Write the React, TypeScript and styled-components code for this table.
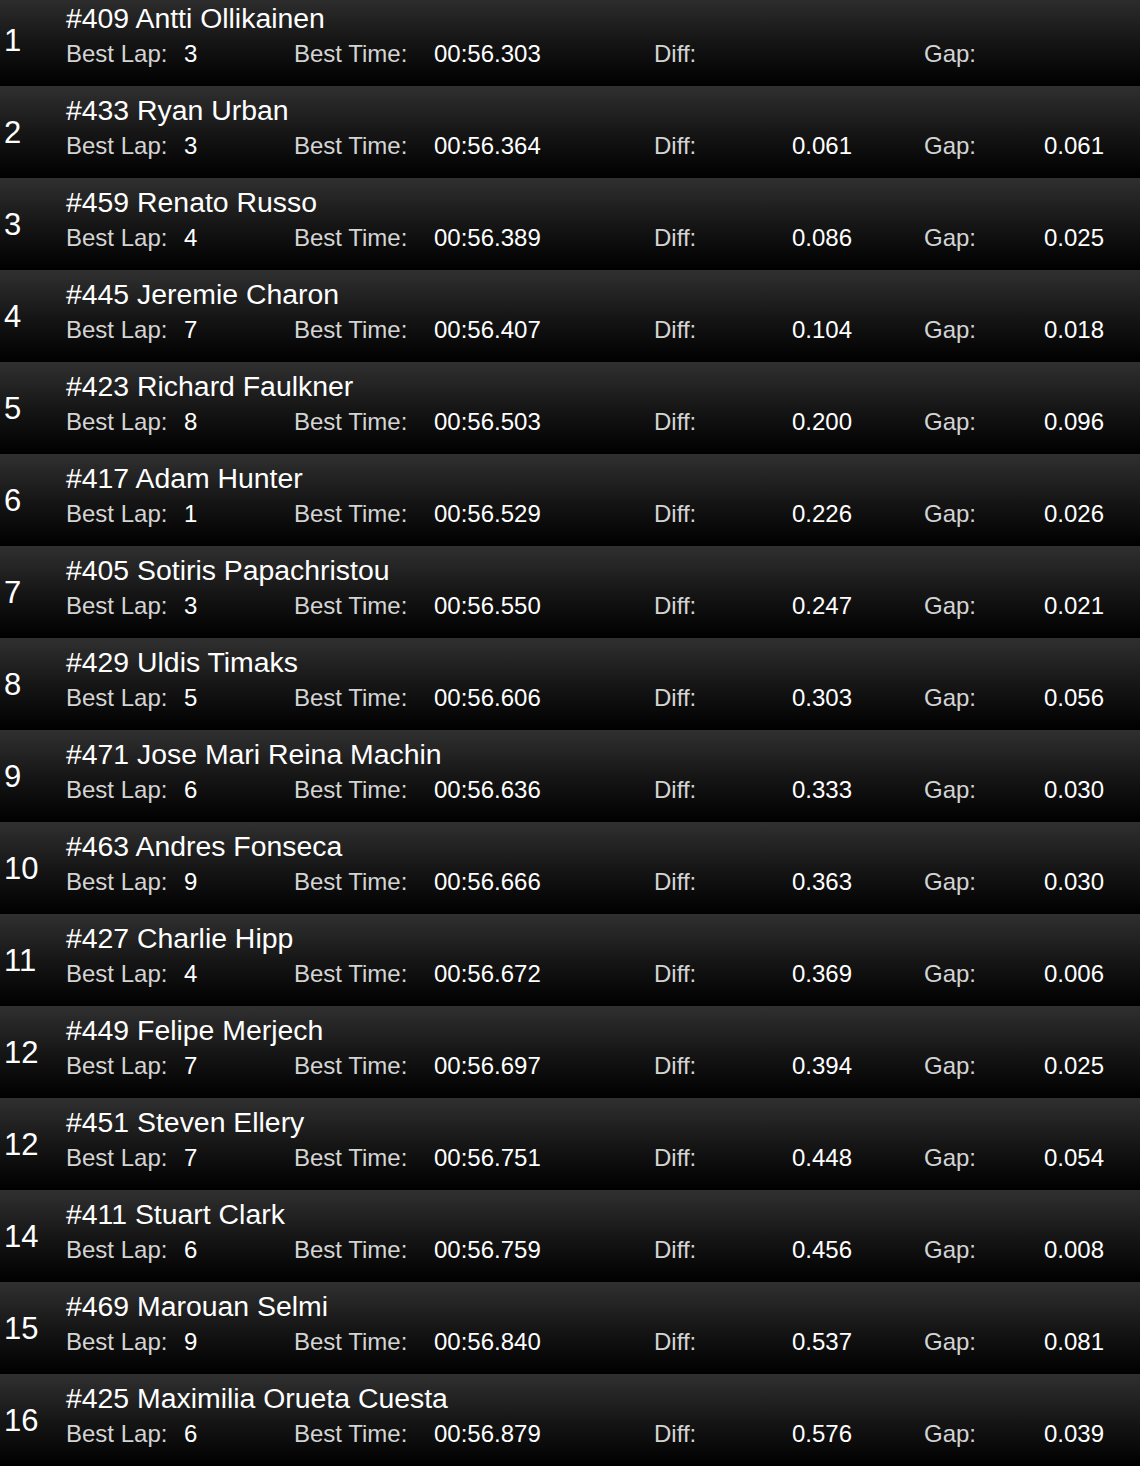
import React from "react";
import styled, { createGlobalStyle } from "styled-components";

const GlobalStyle = createGlobalStyle`
  html, body {
    margin: 0;
    padding: 0;
    background: #000;
  }
  body {
    font-family: "Liberation Sans", Arial, Helvetica, sans-serif;
    overflow: hidden;
  }
`;

type Result = {
  pos: string;
  name: string;
  lap: number;
  time: string;
  diff?: string;
  gap?: string;
};

const results: Result[] = [
  { pos: "1", name: "#409 Antti Ollikainen", lap: 3, time: "00:56.303" },
  { pos: "2", name: "#433 Ryan Urban", lap: 3, time: "00:56.364", diff: "0.061", gap: "0.061" },
  { pos: "3", name: "#459 Renato Russo", lap: 4, time: "00:56.389", diff: "0.086", gap: "0.025" },
  { pos: "4", name: "#445 Jeremie Charon", lap: 7, time: "00:56.407", diff: "0.104", gap: "0.018" },
  { pos: "5", name: "#423 Richard Faulkner", lap: 8, time: "00:56.503", diff: "0.200", gap: "0.096" },
  { pos: "6", name: "#417 Adam Hunter", lap: 1, time: "00:56.529", diff: "0.226", gap: "0.026" },
  { pos: "7", name: "#405 Sotiris Papachristou", lap: 3, time: "00:56.550", diff: "0.247", gap: "0.021" },
  { pos: "8", name: "#429 Uldis Timaks", lap: 5, time: "00:56.606", diff: "0.303", gap: "0.056" },
  { pos: "9", name: "#471 Jose Mari Reina Machin", lap: 6, time: "00:56.636", diff: "0.333", gap: "0.030" },
  { pos: "10", name: "#463 Andres Fonseca", lap: 9, time: "00:56.666", diff: "0.363", gap: "0.030" },
  { pos: "11", name: "#427 Charlie Hipp", lap: 4, time: "00:56.672", diff: "0.369", gap: "0.006" },
  { pos: "12", name: "#449 Felipe Merjech", lap: 7, time: "00:56.697", diff: "0.394", gap: "0.025" },
  { pos: "12", name: "#451 Steven Ellery", lap: 7, time: "00:56.751", diff: "0.448", gap: "0.054" },
  { pos: "14", name: "#411 Stuart Clark", lap: 6, time: "00:56.759", diff: "0.456", gap: "0.008" },
  { pos: "15", name: "#469 Marouan Selmi", lap: 9, time: "00:56.840", diff: "0.537", gap: "0.081" },
  { pos: "16", name: "#425 Maximilia Orueta Cuesta", lap: 6, time: "00:56.879", diff: "0.576", gap: "0.039" },
];

const Board = styled.div`
  margin-top: -6px;
  width: 1140px;
`;

const Row = styled.div`
  display: grid;
  grid-template-columns: 66px 1fr;
  height: 92px;
  background: linear-gradient(to bottom, #303030 0%, #161616 50%, #000 100%);
`;

const Position = styled.div`
  align-self: center;
  padding-left: 4px;
  font-size: 31px;
  line-height: 31px;
  color: #fff;
`;

const Details = styled.div`
  padding-top: 9px;
`;

const Name = styled.div`
  font-size: 28.4px;
  line-height: 30px;
  color: #fff;
  margin-bottom: 7px;
  white-space: nowrap;
`;

const Stats = styled.div`
  display: grid;
  grid-template-columns: 118px 110px 140px 220px 138px 132px 120px auto;
  font-size: 24px;
  line-height: 28px;
  white-space: nowrap;
`;

const Label = styled.span`
  color: #d4d4d4;
`;

const Value = styled.span`
  color: #fff;
`;

const App: React.FC = () => {
  return (
    <>
      <GlobalStyle />
      <Board>
        {results.map((r, i) => (
          <Row key={i}>
            <Position>{r.pos}</Position>
            <Details>
              <Name>{r.name}</Name>
              <Stats>
                <Label>Best Lap:</Label>
                <Value>{r.lap}</Value>
                <Label>Best Time:</Label>
                <Value>{r.time}</Value>
                <Label>Diff:</Label>
                <Value>{r.diff ?? ""}</Value>
                <Label>Gap:</Label>
                <Value>{r.gap ?? ""}</Value>
              </Stats>
            </Details>
          </Row>
        ))}
      </Board>
    </>
  );
};

export default App;
